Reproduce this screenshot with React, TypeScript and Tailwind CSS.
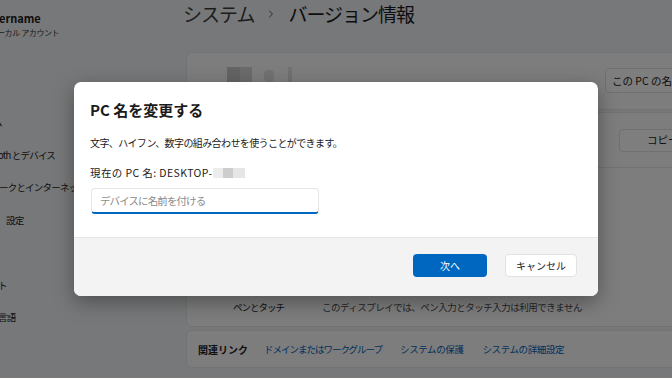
import { ChevronRight } from 'lucide-react';

const font = "font-['Noto_Sans_CJK_JP','Noto_Sans',sans-serif]";

function NavItem({ children, className = '' }: { children?: React.ReactNode; className?: string }) {
  return (
    <div className={`h-[32.5px] flex items-center text-[9.5px] tracking-[-0.8px] text-[#1b1b1b] whitespace-nowrap ${className}`}>
      {children}
    </div>
  );
}

export default function App() {
  return (
    <div className={`relative w-[672px] h-[378px] overflow-hidden bg-[#eef0f3] ${font}`}>
      {/* settings page behind the dialog */}
      <div className="flex h-full">
        <aside className="w-[183px] shrink-0">
          <div className="pt-[10px]">
            <div className="text-[11px] font-bold leading-[16px] text-[#1b1b1b] -ml-[1px]">ername</div>
            <div className="text-[8px] leading-[12px] tracking-[-0.4px] text-[#3a3a3a] mt-[1px] -ml-[3px]">ーカル アカウント</div>
          </div>
          <div className="mt-[67px]">
            <NavItem className="-ml-[7px]">ム</NavItem>
            <NavItem className="-ml-[2px]">oth とデバイス</NavItem>
            <NavItem className="-ml-[1px]">ークとインターネット</NavItem>
            <NavItem className="pl-[6px]">設定</NavItem>
            <NavItem />
            <NavItem className="-ml-[2px]">ト</NavItem>
            <NavItem className="-ml-[2px]">言語</NavItem>
          </div>
        </aside>

        <main className="flex-1 min-w-0">
          <h1 className="h-[28px] flex items-center text-[19px] tracking-[-1px] leading-[28px] whitespace-nowrap">
            <span className="text-[#3b3b3b]">システム</span>
            <ChevronRight className="w-[12px] h-[12px] mx-[11px] text-[#5a5a5a]" strokeWidth={2} />
            <span className="text-[#1b1b1b]">バージョン情報</span>
          </h1>

          {/* device card */}
          <div className="ml-[3px] mt-[24px] w-[580px] h-[58px] bg-[#fbfbfb] border border-[#e5e5e5] rounded-[6px] flex items-start">
            <div className="flex items-start gap-[12px] pl-[40px] pt-[14px]">
              <div className="flex">
                <div className="w-[13px] h-[16px] bg-[#c9c9c9]" />
                <div className="w-[12px] h-[16px] bg-[#d6d6d6]" />
              </div>
              <div className="w-[10px] h-[12px] mt-[3px] rounded-[4px] bg-[#e4e4e4]" />
              <div className="w-[4px] h-[16px] ml-[2px] bg-[#e2e2e2]" />
            </div>
            <div className="ml-auto mr-[10px] mt-[15px] w-[150px] h-[25px] border border-[#e0e0e0] bg-[#fdfdfd] rounded-[4px] flex items-center pl-[6px] text-[10.5px] text-[#1b1b1b] whitespace-nowrap">
              この PC の名前を変更
            </div>
          </div>

          {/* specs card */}
          <div className="ml-[3px] mt-[2px] w-[580px] h-[215px] bg-[#fbfbfb] border border-[#e5e5e5] rounded-[6px] flex flex-col">
            <div className="h-[55px] border-b border-[#e5e5e5] flex items-center">
              <div className="ml-auto mr-[66px] w-[80px] h-[23px] border border-[#e0e0e0] bg-[#fdfdfd] rounded-[4px] flex items-center pl-[27px] text-[10.5px] text-[#1b1b1b]">
                コピー
              </div>
            </div>
            <div className="mt-auto h-[38px] flex items-start pt-[12px] text-[9.5px] whitespace-nowrap">
              <span className="pl-[46px] w-[135px] tracking-[-1px] text-[#1b1b1b]">ペンとタッチ</span>
              <span className="tracking-[-0.5px] text-[#4a4a4a]">このディスプレイでは、ペン入力とタッチ入力は利用できません</span>
            </div>
          </div>

          {/* related links */}
          <div className="ml-[3px] mt-[3px] w-[580px] h-[38px] bg-[#fbfbfb] border border-[#e5e5e5] rounded-[6px] flex items-center text-[9.5px] whitespace-nowrap">
            <span className="pl-[11px] font-bold text-[10px] text-[#1b1b1b]">関連リンク</span>
            <span className="ml-[16px] tracking-[-1px] text-[#005fb8]">ドメインまたはワークグループ</span>
            <span className="ml-[18px] tracking-[-0.4px] text-[#005fb8]">システムの保護</span>
            <span className="ml-[19px] tracking-[-0.4px] text-[#005fb8]">システムの詳細設定</span>
          </div>
        </main>
      </div>

      {/* dim overlay */}
      <div className="absolute inset-0 bg-black/50" />

      {/* rename dialog */}
      <div className="absolute left-[74px] top-[82px] w-[524px] h-[214px] bg-white rounded-[7px] overflow-hidden shadow-[0_6px_20px_rgba(0,0,0,0.35)] flex flex-col">
        <div className="px-[16px] pt-[18px]">
          <h2 className="text-[15px] leading-[20px] font-semibold text-[#1b1b1b]">PC 名を変更する</h2>
          <p className="mt-[15px] text-[10px] leading-[16px] tracking-[-0.6px] text-[#1b1b1b]">
            文字、ハイフン、数字の組み合わせを使うことができます。
          </p>
          <div className="mt-[14px] flex items-center text-[10.5px] leading-[16px] text-[#1b1b1b]">
            <span className="tracking-[0.4px]">現在の PC 名: DESKTOP-</span>
            <span className="flex ml-[1px]">
              <span className="w-[10px] h-[10px] bg-[#ececec]" />
              <span className="w-[10px] h-[10px] bg-[#cdcdcd]" />
              <span className="w-[12px] h-[10px] bg-[#e6e6e6]" />
            </span>
          </div>
          <div className="mt-[7px] ml-[1px] w-[228px] h-[26px] border border-[#e6e6e6] border-b-2 border-b-[#0067c0] rounded-[4px] flex items-center pl-[8px] text-[10.5px] tracking-[-0.9px] text-[#8b8b8b]">
            デバイスに名前を付ける
          </div>
        </div>
        <div className="mt-auto h-[59px] bg-[#f3f3f3] border-t border-[#e5e5e5] flex items-center justify-end pr-[21px] pb-[4px]">
          <button className="w-[74px] h-[23px] rounded-[4px] bg-[#0067c0] text-white text-[10px]">次へ</button>
          <button className="ml-[18px] w-[72px] h-[23px] rounded-[4px] bg-white border border-[#e2e2e2] text-[#1b1b1b] text-[10px]">キャンセル</button>
        </div>
      </div>
    </div>
  );
}
